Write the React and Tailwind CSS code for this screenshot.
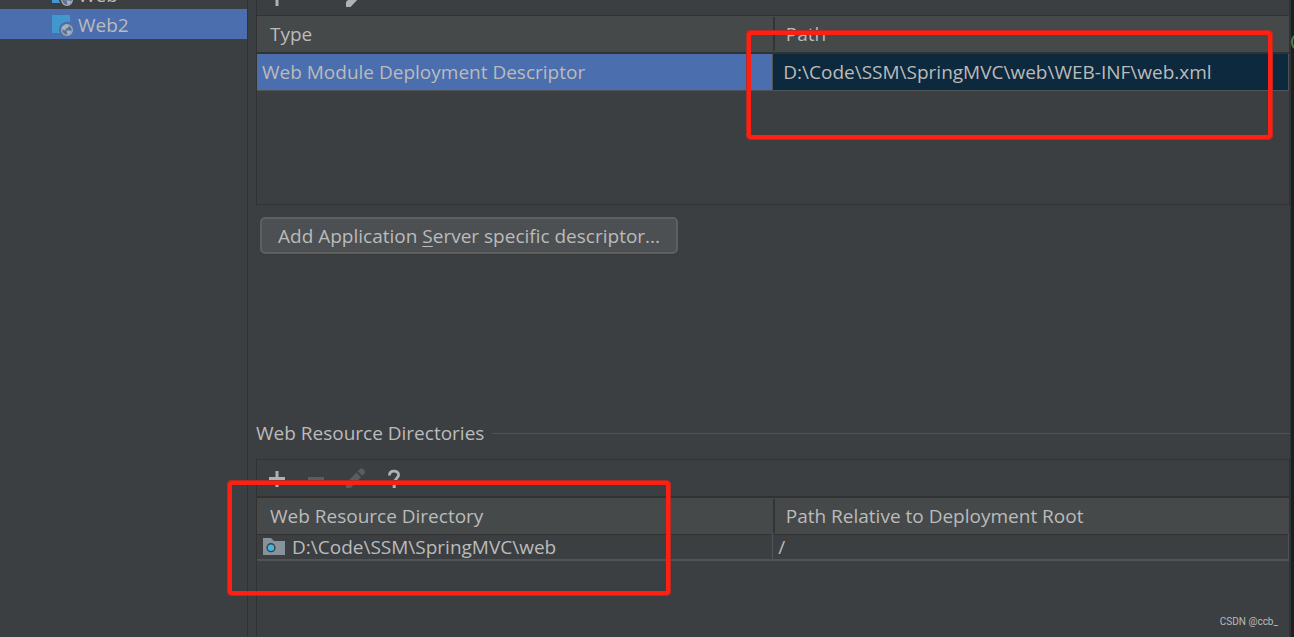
import React from "react";

const WebFacetIcon = () => (
  <svg className="h-6 w-6 shrink-0" viewBox="0 0 24 24" fill="none" aria-hidden="true">
    <path d="M1 3H19V10A8 8 0 0 0 9 21H1Z" fill="#4397cf" />
    <circle cx="16" cy="18" r="5.3" fill="#5b6f96" stroke="#a3adb8" strokeWidth="1.3" />
    <path
      d="M11 15.5L14 13H17L18 14.5L16.5 16L14.8 16.5L14.5 18.5L12.5 18L11 16.8ZM15.5 18.5H18.5L20.5 19.5L19 21.5L16.8 23L16 21Z"
      fill="#a9b2ba"
    />
  </svg>
);

const PlusIcon = () => (
  <svg className="size-6" viewBox="0 0 24 24" fill="none" aria-hidden="true">
    <path d="M4 12.5H20M12 5V21" stroke="#afb1b3" strokeWidth="3" />
  </svg>
);

const MinusIcon = () => (
  <svg className="size-6" viewBox="0 0 24 24" fill="none" aria-hidden="true">
    <path d="M4 12.5H20" stroke="#5a5d5f" strokeWidth="3" />
  </svg>
);

const PencilIcon = ({ className }) => (
  <svg className={`size-6 ${className}`} viewBox="0 0 24 24" fill="currentColor" aria-hidden="true">
    <path d="M3 22V17L13.5 6.5L18 11L7.5 22ZM14.7 5.3L17.1 2.9Q18.5 1.5 20 3L21.5 4.5Q23 6 21.6 7.4L19.2 9.8Z" />
  </svg>
);

const HelpIcon = () => (
  <svg className="size-6" viewBox="0 0 24 24" fill="none" aria-hidden="true">
    <path
      d="M7.4 9.6C7.4 6.4 9.4 5.1 12 5.1S16.6 6.6 16.6 9.1C16.6 12 12.2 12.6 12.2 17"
      stroke="#afb1b3"
      strokeWidth="2.8"
    />
    <path d="M10.7 19H13.7V22H10.7Z" fill="#afb1b3" />
  </svg>
);

const FolderIcon = () => (
  <svg className="h-5 w-6 shrink-0" viewBox="0 0 24 20" fill="none" aria-hidden="true">
    <path d="M1 1H9L12 4H23V18H1Z" fill="#87939a" />
    <circle cx="9" cy="10.7" r="4.6" fill="#3c3f41" />
    <circle cx="9" cy="10.7" r="3.2" fill="#40b6e0" />
  </svg>
);

const ToolButton = ({ label, disabled, children }) => (
  <button type="button" aria-label={label} disabled={disabled} className="shrink-0">
    {children}
  </button>
);

const HeaderCell = ({ children, divided }) => (
  <th scope="col" className="h-[37px] w-1/2 p-0 text-left font-normal">
    <div className={`flex h-[34px] items-center pt-px ${divided ? "border-l-2 border-[#323538] pl-[11px]" : "pl-[13px]"}`}>
      {children}
    </div>
  </th>
);

const SidebarItem = ({ label, selected }) => (
  <a
    href="#"
    aria-current={selected ? "page" : undefined}
    className={`flex h-[30px] shrink-0 items-center gap-[3px] pl-[51px] ${selected ? "bg-[#4b6eaf]" : ""}`}
  >
    <WebFacetIcon />
    <span className="pt-px">{label}</span>
  </a>
);

export default function App() {
  return (
    <div className="relative flex h-screen overflow-hidden bg-[#3c3f41] font-['Open_Sans','Noto_Sans',sans-serif] text-[19px] leading-6 text-[#bbbbbb]">
      <nav className="flex w-[248px] shrink-0 flex-col border-r border-[#323232]">
        <div className="flex h-[39px] shrink-0 flex-col justify-end overflow-hidden">
          <SidebarItem label="Web" />
          <SidebarItem label="Web2" selected />
        </div>
      </nav>

      <main className="flex min-w-0 flex-1 flex-col pl-2">
        <section className="flex h-[205px] shrink-0 flex-col border-x border-b border-[#323232]">
          <div className="flex h-[15px] shrink-0 flex-col justify-end overflow-hidden">
            <div className="flex h-9 shrink-0 items-center gap-[15px] pl-2">
              <ToolButton label="Add descriptor"><PlusIcon /></ToolButton>
              <ToolButton label="Remove descriptor"><MinusIcon /></ToolButton>
              <ToolButton label="Edit descriptor"><PencilIcon className="text-[#afb1b3]" /></ToolButton>
            </div>
          </div>
          <table className="w-full table-fixed border-collapse">
            <thead className="border-t border-b-2 border-[#323232] bg-[#45494a]">
              <tr>
                <HeaderCell>Type</HeaderCell>
                <HeaderCell divided>Path</HeaderCell>
              </tr>
            </thead>
            <tbody>
              <tr className="border-b border-[#515456]">
                <td className="h-[38px] border-r border-[#515456] bg-[#4b6eaf] py-0 pl-[5px]">
                  Web Module Deployment Descriptor
                </td>
                <td className="h-[38px] border-r border-[#515456] bg-[#0d293e] py-0 pl-[10px]">
                  D:\Code\SSM\SpringMVC\web\WEB-INF\web.xml
                </td>
              </tr>
            </tbody>
          </table>
        </section>

        <div className="px-1 pt-3">
          <button
            type="button"
            className="h-[37px] rounded-[5px] border-2 border-[#5e6060] bg-[#4c5052] px-4 leading-8 whitespace-nowrap shadow-[0_1px_1px_#353739]"
          >
            Add Application <span className="underline underline-offset-3">S</span>erver specific descriptor...
          </button>
        </div>

        <div className="mt-[167px] flex items-center gap-2">
          <h2>Web Resource Directories</h2>
          <div className="h-px flex-1 bg-[#515456]" />
        </div>

        <section className="mt-[14px] flex-1 border-x border-t border-[#323232]">
          <div className="flex h-9 items-center gap-[15px] pl-2">
            <ToolButton label="Add directory"><PlusIcon /></ToolButton>
            <ToolButton label="Remove directory" disabled><MinusIcon /></ToolButton>
            <ToolButton label="Edit directory" disabled><PencilIcon className="text-[#5a5d5f]" /></ToolButton>
            <ToolButton label="Help"><HelpIcon /></ToolButton>
          </div>
          <table className="w-full table-fixed border-collapse">
            <thead className="border-t-2 border-b border-[#323232] bg-[#45494a]">
              <tr>
                <HeaderCell>Web Resource Directory</HeaderCell>
                <HeaderCell divided>Path Relative to Deployment Root</HeaderCell>
              </tr>
            </thead>
            <tbody>
              <tr className="border-b-2 border-[#515456]">
                <td className="h-[26px] border-r border-[#515456] py-0 pl-[5px]">
                  <div className="flex items-center gap-[6px]">
                    <FolderIcon />
                    D:\Code\SSM\SpringMVC\web
                  </div>
                </td>
                <td className="h-[26px] border-r border-[#515456] py-0 pl-[5px]">/</td>
              </tr>
            </tbody>
          </table>
        </section>
      </main>

      <div className="w-1 shrink-0 border-l border-[#303233] bg-[#1e1f20]" />

      <svg className="absolute top-[34px] right-0 h-4 w-1" viewBox="0 0 4 16" fill="none" aria-hidden="true">
        <path d="M4 2Q0 8 4 14" stroke="#587848" strokeWidth="2" />
      </svg>
      <div className="absolute top-[30px] left-[746px] h-[110px] w-[527px] rounded-[5px] border-5 border-[#ff2012] outline-1 -outline-offset-1 outline-[#b22c26]" />
      <div className="absolute top-[480px] left-[227px] h-[116px] w-[444px] rounded-[5px] border-5 border-[#ff2012] outline-1 -outline-offset-1 outline-[#b22c26]" />
      <div className="absolute right-4 bottom-[7px] font-['Roboto',sans-serif] text-[10px] leading-4 text-[#b8babb]">
        CSDN @ccb_
      </div>
    </div>
  );
}
